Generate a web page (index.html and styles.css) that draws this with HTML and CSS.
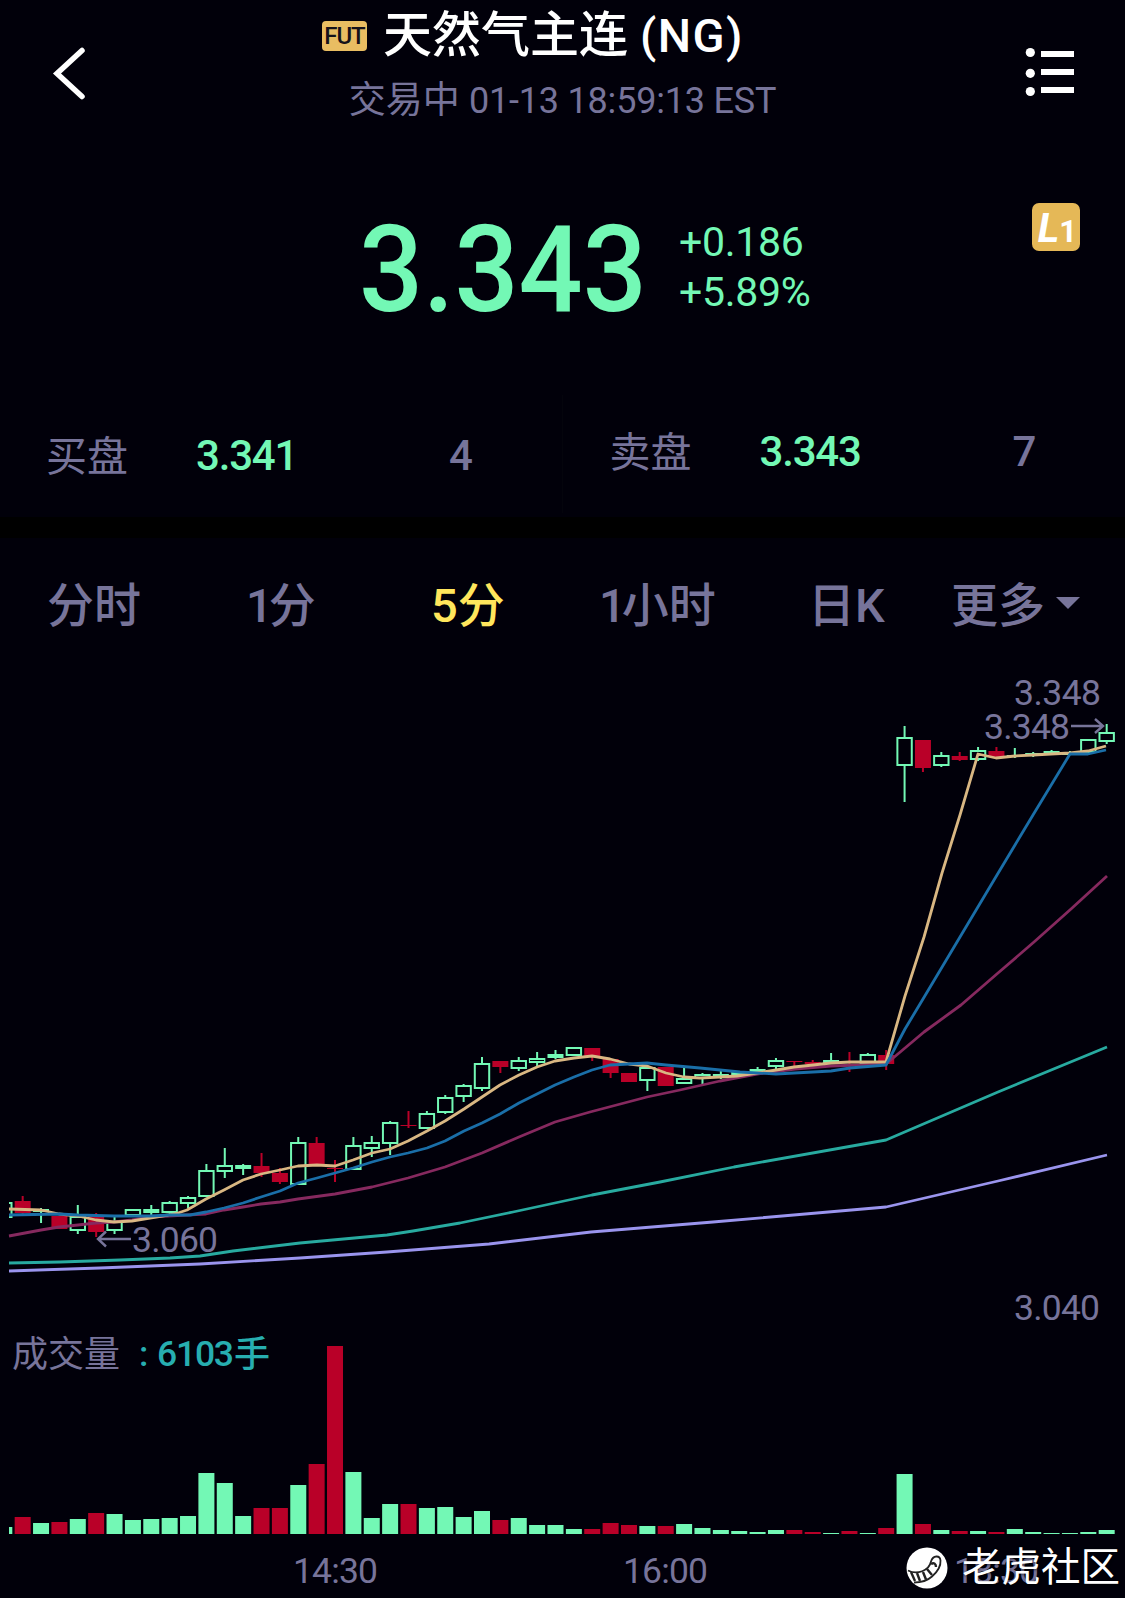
FILE: index.html
```html
<!DOCTYPE html>
<html lang="zh-CN">
  <head>
    <meta charset="UTF-8" />
    <meta name="viewport" content="width=device-width, initial-scale=1.0" />
    <title>天然气主连 (NG)</title>
    <link rel="stylesheet" href="styles.css">
  </head>
  <body>
    <header class="header">
      <svg class="back" width="36" height="56" viewBox="0 0 36 56">
        <path d="M32 5.5 L7 28.5 L32 51.5" />
      </svg>
      <div class="heading">
        <div class="title">
          <span class="tag">FUT</span>
          <h1>天然气主连<span class="code">(NG)</span></h1>
        </div>
        <div class="status">交易中 <span class="time">01-13 18:59:13 EST</span></div>
      </div>
      <svg class="menu" width="50" height="50" viewBox="0 0 50 50">
        <circle cx="5.3" cy="5.5" r="4.6" />
        <circle cx="5.3" cy="26.3" r="4.6" />
        <circle cx="5.3" cy="44.5" r="4.6" />
        <rect x="16" y="4" width="33" height="6" />
        <rect x="16" y="22" width="33" height="6" />
        <rect x="16" y="40" width="33" height="6" />
      </svg>
    </header>

    <section class="quote">
      <div class="price">3.343</div>
      <div class="change">
        <div>+0.186</div>
        <div>+5.89%</div>
      </div>
      <div class="level"><span class="level-l">L</span><span class="level-n">1</span></div>
    </section>

    <section class="book">
      <div class="side buy">
        <span class="label">买盘</span>
        <span class="value">3.341</span>
        <span class="amount">4</span>
      </div>
      <div class="side sell">
        <span class="label">卖盘</span>
        <span class="value">3.343</span>
        <span class="amount">7</span>
      </div>
    </section>

    <nav class="tabs">
      <span class="tab">分时</span>
      <span class="tab"><span class="one">1</span>分</span>
      <span class="tab active">5分</span>
      <span class="tab"><span class="one">1</span>小时</span>
      <span class="tab">日K</span>
      <span class="tab more">更多<i class="caret"></i></span>
    </nav>

    <main class="chart">
      <svg id="chart" width="1125" height="938" viewBox="0 660 1125 938">
        <defs>
          <clipPath id="plot"><rect x="9" y="660" width="1116" height="938" /></clipPath>
        </defs>
        <g id="candles" clip-path="url(#plot)"></g>
        <g id="lines"></g>
        <g id="volume" clip-path="url(#plot)"></g>
        <g class="arrow">
          <path d="M1071 726 H1103 M1095 719 L1103 726 L1095 733" />
          <path d="M131 1239 H98 M106 1231.5 L98 1239 L106 1246.5" />
        </g>
        <g class="labels">
          <text x="1014" y="705" textLength="87">3.348</text>
          <text x="984" y="739" textLength="86">3.348</text>
          <text x="132" y="1252" textLength="86">3.060</text>
          <text x="1014" y="1320" textLength="86">3.040</text>
          <text x="293" y="1583" textLength="85">14:30</text>
          <text x="623" y="1583" textLength="85">16:00</text>
          <text x="954" y="1583" textLength="85">18:30</text>
          <text class="cjk" x="12" y="1367" textLength="108">成交量</text>
          <text class="vol" x="139" y="1366">:</text>
          <text class="vol" x="157" y="1366" textLength="77">6103</text>
          <text class="vol cjk" x="234" y="1367">手</text>
        </g>
      </svg>
    </main>

    <div class="watermark">
      <svg width="44" height="44" viewBox="0 0 44 44">
        <circle cx="22" cy="22" r="20.5" fill="#fff" />
        <path d="M3 24.5 C12 29 24 25 26 15.5 C28 9 35 9 35.5 14.5 C36 21 31 27 27 30.5 C22 35 15 36.5 9 36.5" />
        <path d="M6 26 L10 35 M12 27 L15 35 M18 26 L21 33.5 M22 23 L27 29 M26 18 C29 16 31 18 31 21" class="stripes" />
      </svg>
      <span>老虎社区</span>
    </div>

    <script>
      // [up, high, body top, body bottom, low, volume height]
      const data = [
        [1, 1202, 1202, 1218, 1218, 7],
        [0, 1196, 1201, 1213, 1216, 17],
        [1, 1208, 1209, 1212, 1223, 11],
        [0, 1216, 1216, 1229, 1229, 12],
        [1, 1205, 1216, 1231, 1234, 15],
        [0, 1213, 1215, 1232, 1237, 21],
        [1, 1217, 1221, 1231, 1234, 20],
        [1, 1209, 1209, 1216, 1216, 14],
        [1, 1205, 1209, 1213, 1215, 15],
        [1, 1201, 1202, 1213, 1217, 16],
        [1, 1196, 1197, 1204, 1208, 18],
        [1, 1164, 1170, 1197, 1197, 61],
        [1, 1148, 1165, 1172, 1178, 51],
        [1, 1164, 1165, 1169, 1175, 18],
        [0, 1153, 1166, 1173, 1177, 26],
        [0, 1168, 1173, 1182, 1184, 26],
        [1, 1137, 1142, 1185, 1185, 49],
        [0, 1137, 1143, 1164, 1164, 70],
        [0, 1160, 1168, 1169, 1182, 188],
        [1, 1137, 1145, 1170, 1170, 62],
        [1, 1136, 1142, 1149, 1157, 16],
        [1, 1121, 1122, 1144, 1155, 30],
        [0, 1111, 1125, 1126, 1128, 30],
        [1, 1111, 1113, 1129, 1129, 26],
        [1, 1095, 1097, 1113, 1114, 27],
        [1, 1084, 1085, 1097, 1102, 17],
        [1, 1057, 1063, 1089, 1091, 23],
        [0, 1061, 1061, 1067, 1073, 14],
        [1, 1057, 1060, 1069, 1071, 16],
        [1, 1052, 1058, 1063, 1066, 9],
        [1, 1050, 1054, 1058, 1059, 9],
        [1, 1047, 1047, 1056, 1056, 5],
        [0, 1048, 1048, 1056, 1061, 5],
        [0, 1059, 1059, 1073, 1078, 11],
        [0, 1073, 1073, 1082, 1082, 9],
        [1, 1066, 1067, 1081, 1091, 8],
        [0, 1067, 1067, 1086, 1086, 8],
        [1, 1068, 1078, 1084, 1084, 10],
        [1, 1073, 1074, 1079, 1084, 6],
        [1, 1071, 1074, 1078, 1079, 4],
        [1, 1072, 1072, 1076, 1076, 3],
        [1, 1067, 1069, 1072, 1073, 2],
        [1, 1058, 1060, 1067, 1069, 4],
        [0, 1061, 1061, 1062, 1067, 4],
        [0, 1060, 1062, 1064, 1064, 2],
        [1, 1053, 1060, 1064, 1064, 1],
        [0, 1052, 1062, 1063, 1072, 3],
        [1, 1053, 1054, 1064, 1064, 1],
        [0, 1050, 1055, 1064, 1070, 6],
        [1, 726, 737, 766, 802, 60],
        [0, 740, 740, 768, 772, 10],
        [1, 752, 755, 766, 767, 4],
        [0, 752, 756, 760, 761, 3],
        [1, 747, 750, 760, 761, 3],
        [0, 747, 751, 757, 757, 2],
        [1, 748, 755, 756, 758, 5],
        [1, 752, 753, 756, 757, 2],
        [1, 750, 751, 755, 755, 1],
        [1, 751, 752, 755, 755, 1],
        [1, 739, 739, 753, 753, 2],
        [1, 724, 732, 742, 744, 4],
      ];

      const averages = {
        ma60: "9,1271 100,1268 200,1264 300,1258 387,1252 489,1244 591,1232 713,1222 886,1207 998,1181 1107,1155",
        ma30: "9,1263 60,1262 120,1260 170,1258 200,1256 233,1251 300,1243 387,1235 413,1231 460,1223 513,1212 592,1195 660,1182 734,1167 886,1140 998,1092 1107,1047",
        ma20: "9,1236 41,1230 59,1227 78,1225 96,1223 114,1222 132,1220 150,1217 168,1216 206,1214 224,1210 243,1207 261,1204 280,1202 298,1199 335,1194 372,1187 408,1178 445,1167 482,1153 519,1137 555,1122 590,1112 647,1097 680,1090 720,1081 757,1074 795,1069 831,1066 886,1064 924,1032 961,1005 998,973 1034,942 1071,909 1107,876",
        ma5: "9,1209 41,1210 59,1214 78,1216 96,1220 114,1222 132,1221 150,1218 168,1215 178,1213 187,1210 206,1199 224,1190 243,1180 261,1174 280,1170 298,1166 317,1165 335,1166 353,1160 372,1153 390,1149 408,1141 427,1131 445,1121 464,1109 482,1097 500,1085 519,1075 537,1067 555,1061 574,1058 592,1056 610,1059 629,1064 647,1066 666,1073 684,1077 700,1078 720,1077 737,1076 757,1073 776,1070 794,1067 813,1065 831,1063 850,1062 886,1062 905,996 924,937 942,873 960,815 978,754 996,758 1015,756 1033,755 1051,754 1070,753 1088,751 1106,746",
        ma10: "9,1215 59,1214 78,1215 114,1216 150,1216 170,1215 190,1215 206,1212 224,1208 243,1203 261,1197 280,1191 298,1183 317,1178 335,1173 353,1168 372,1162 390,1157 408,1153 427,1148 445,1141 464,1131 482,1123 500,1114 519,1103 537,1094 555,1085 574,1077 592,1070 610,1065 629,1064 647,1063 666,1065 700,1068 740,1072 776,1074 794,1073 813,1072 831,1071 850,1068 886,1065 905,1029 923,999 960,937 997,875 1033,815 1070,754 1088,754 1106,750",
      };

      const step = 18.373;
      const volumeBase = 1534;

      function add(parent, tag, attrs) {
        const el = document.createElementNS("http://www.w3.org/2000/svg", tag);
        for (const key in attrs) {
          el.setAttribute(key, attrs[key]);
        }
        document.getElementById(parent).appendChild(el);
      }

      data.forEach(([up, high, top, bottom, low, vol], i) => {
        const x = 4.3 + step * i;
        const cls = up ? "up" : "down";

        if (high < top) {
          add("candles", "rect", { class: cls, x: x - 1, y: high, width: 2, height: top - high });
        }
        if (low > bottom) {
          add("candles", "rect", { class: cls, x: x - 1, y: bottom, width: 2, height: low - bottom });
        }
        if (up && bottom - top > 4) {
          add("candles", "rect", { class: "hollow", x: x - 7.2, y: top + 1, width: 14.4, height: bottom - top - 2 });
        } else {
          add("candles", "rect", { class: cls, x: x - 8, y: top, width: 16, height: bottom - top });
        }

        add("volume", "rect", { class: cls, x: x - 8, y: volumeBase - vol, width: 16, height: vol });
      });

      for (const name in averages) {
        add("lines", "polyline", { class: "line " + name, points: averages[name] });
      }
    </script>
  </body>
</html>
```
FILE: styles.css
```css
* {
  box-sizing: border-box;
}
body {
  margin: 0;
  width: 1125px;
  height: 1598px;
  overflow: hidden;
  position: relative;
  background: #01000a;
  color: #77749a;
  font-family: Roboto, "Noto Sans CJK SC", sans-serif;
}
.header {
  display: flex;
  justify-content: space-between;
  align-items: flex-start;
  height: 150px;
  padding: 0 50px 0 50px;
}
.back {
  margin-top: 45px;
  width: 36px;
}
.back path {
  fill: none;
  stroke: #fff;
  stroke-width: 5.5;
  stroke-linecap: round;
}
.menu {
  margin-top: 47px;
  fill: #fff;
}
.heading {
  display: flex;
  flex-direction: column;
  align-items: center;
  padding-left: 14px;
}
.title {
  display: flex;
  align-items: center;
  height: 72px;
  margin-right: 59px;
}
.tag {
  width: 45px;
  height: 30px;
  margin-right: 16px;
  border-radius: 4px;
  background: #e9bd62;
  color: #16121a;
  font-size: 24px;
  font-weight: 500;
  line-height: 31px;
  text-align: center;
  letter-spacing: -1px;
}
h1 {
  margin: 0;
  color: #fff;
  font-size: 49px;
  font-weight: 500;
  line-height: 74px;
  white-space: nowrap;
}
.code {
  margin-left: 12px;
  font-size: 47px;
  letter-spacing: 1.5px;
}
.status {
  height: 56px;
  font-size: 37px;
  line-height: 58px;
  white-space: nowrap;
}
.time {
  font-size: 36px;
  letter-spacing: -0.2px;
}
.quote {
  display: flex;
  height: 245px;
  padding: 53px 45px 0 359px;
  color: #73f8b5;
}
/* narrower digits for the last price */
.price {
  width: 320px;
  font-size: 120px;
  font-weight: 500;
  line-height: 134px;
  transform: scaleX(0.94);
  transform-origin: left;
}
.change {
  width: 353px;
  padding-top: 14px;
  font-size: 41px;
  line-height: 50px;
  letter-spacing: -0.3px;
}
.level {
  display: flex;
  justify-content: center;
  align-items: baseline;
  width: 48px;
  height: 48px;
  padding-left: 3px;
  border-radius: 7px;
  background: #e5b857;
  color: #fff;
  font-weight: 700;
}
.level-l {
  font-size: 41px;
  font-style: italic;
  line-height: 51px;
}
.level-n {
  font-size: 31px;
}
.book {
  display: flex;
  height: 143px;
  border-bottom: 21px solid #000;
}
.side {
  display: grid;
  grid-template-columns: 150px 220px 60px;
  align-items: center;
  width: 563px;
  height: 118px;
  padding-left: 46px;
  border-right: 1px solid #04040c;
  font-size: 42px;
}
.sell {
  height: 110px;
  padding-left: 47px;
  border-right: none;
}
.label {
  padding-bottom: 2px;
  font-size: 41px;
}
.value {
  padding-top: 3px;
  color: #73f8b5;
  font-weight: 500;
  letter-spacing: -1.2px;
}
.amount {
  padding: 3px 0 0 33px;
  font-weight: 500;
}
.tabs {
  display: grid;
  grid-template-columns: 199px 185px 168px 209px 143px 1fr;
  align-items: center;
  height: 122px;
  padding: 4px 0 0 47px;
  font-size: 47px;
  font-weight: 500;
  white-space: nowrap;
}
.one {
  letter-spacing: -4px;
}
.active {
  color: #ffe65c;
}
.more {
  display: flex;
  align-items: center;
}
.caret {
  margin: 3px 0 0 11px;
  border: 12px solid transparent;
  border-top-color: #77749a;
  border-bottom: none;
}
.chart svg {
  display: block;
}
.up {
  fill: #73f8b5;
}
.down {
  fill: #b90028;
}
.hollow {
  fill: none;
  stroke: #73f8b5;
  stroke-width: 2;
}
.line {
  fill: none;
  stroke-width: 2.8;
  stroke-linejoin: round;
}
.ma5 {
  stroke: #d9b783;
}
.ma10 {
  stroke: #1a6ea8;
}
.ma20 {
  stroke: #86295f;
}
.ma30 {
  stroke: #28aaa0;
}
.ma60 {
  stroke: #9a94ee;
}
.arrow {
  fill: none;
  stroke: #77749a;
  stroke-width: 2.4;
}
.labels {
  fill: #77749a;
  font-size: 35.5px;
}
.labels .vol {
  fill: #27aeb0;
  font-weight: 500;
}
.labels .cjk {
  font-size: 36px;
}
.watermark {
  position: absolute;
  right: 5px;
  bottom: 4px;
  display: flex;
  align-items: center;
  gap: 13px;
  color: #fff;
  font-size: 39.5px;
  line-height: 52px;
  text-shadow: 0 1px 3px rgba(0, 0, 0, 0.6);
}
.watermark path {
  fill: none;
  stroke: #222;
  stroke-width: 1.8;
}
.watermark .stripes {
  stroke-width: 2.4;
}
```
